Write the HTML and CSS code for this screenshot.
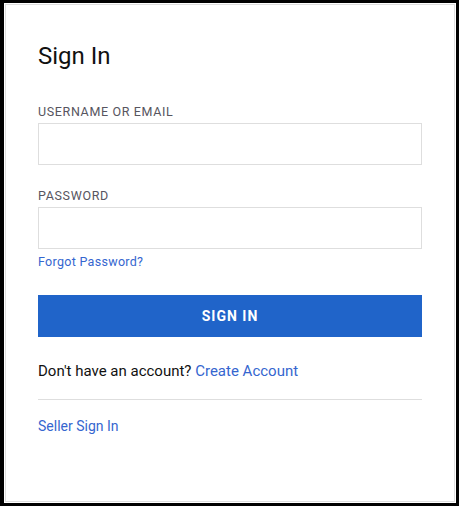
FILE: index.html
```html
<!DOCTYPE html>
<html lang="en">
<head>
    <meta charset="UTF-8">
    <meta name="viewport" content="width=device-width, initial-scale=1.0">
    <title>Sign In</title>
    <link rel="stylesheet" href="styles.css">
</head>
<body>
    <div class="frame">
        <div class="container">
            <h2>Sign In</h2>
            <form id="signinForm">
                <div class="form-group">
                    <label for="username">Username or Email</label>
                    <input type="text" id="username" name="username">
                </div>

                <div class="form-group">
                    <label for="password">Password</label>
                    <input type="password" id="password" name="password">
                    <a href="#" class="link forgot">Forgot Password?</a>
                </div>

                <button type="submit" class="btn">Sign In</button>
            </form>
            <p class="register">Don't have an account? <a href="#" class="link">Create Account</a></p>
            <hr class="divider">
            <a href="#" class="link seller">Seller Sign In</a>
        </div>
    </div>
</body>
</html>
```

FILE: styles.css
```css
:root {
    --primary-color: #2064c9;
    --link-color: #3566cf;
    --border-color: #dedede;
    --label-color: #575560;
    --text-color: #111;
}

* {
    box-sizing: border-box;
    margin: 0;
    padding: 0;
}

html, body {
    height: 100%;
}

body {
    font-family: Roboto, Arial, sans-serif;
    background: #000;
    color: var(--text-color);
    padding: 3px 3px 3px 4px;
}

.frame {
    background: #fff;
    height: 100%;
    padding: 1px;
}

.container {
    height: 100%;
    border: 1px solid var(--border-color);
    padding: 35px 32px 0 32px;
}

h2 {
    font-weight: 400;
    font-size: 24px;
    line-height: 32px;
    margin-bottom: 32px;
}

.form-group {
    margin-bottom: 23px;
}

label {
    display: block;
    font-size: 12.5px;
    line-height: 16px;
    color: var(--label-color);
    text-transform: uppercase;
    letter-spacing: 0.65px;
    margin-bottom: 3px;
}

input[type="text"],
input[type="password"] {
    display: block;
    width: 100%;
    height: 42px;
    border: 1px solid var(--border-color);
    padding: 0 12px;
    font-size: 15px;
    outline: none;
}

.link {
    color: var(--link-color);
    text-decoration: none;
}

.forgot {
    display: block;
    font-size: 12.5px;
    line-height: 16px;
    letter-spacing: 0.3px;
    margin-top: 5px;
}

.btn {
    display: block;
    width: 100%;
    height: 42px;
    margin-top: 25px;
    background: var(--primary-color);
    color: #fff;
    border: none;
    font-family: inherit;
    font-size: 14px;
    font-weight: 700;
    letter-spacing: 1px;
    text-transform: uppercase;
    cursor: pointer;
}

.register {
    font-size: 15px;
    line-height: 20px;
    margin-top: 24px;
}

.divider {
    border: none;
    border-top: 1px solid var(--border-color);
    margin: 18px 0 16px;
}

.seller {
    display: block;
    font-size: 14px;
    line-height: 20px;
}
```
